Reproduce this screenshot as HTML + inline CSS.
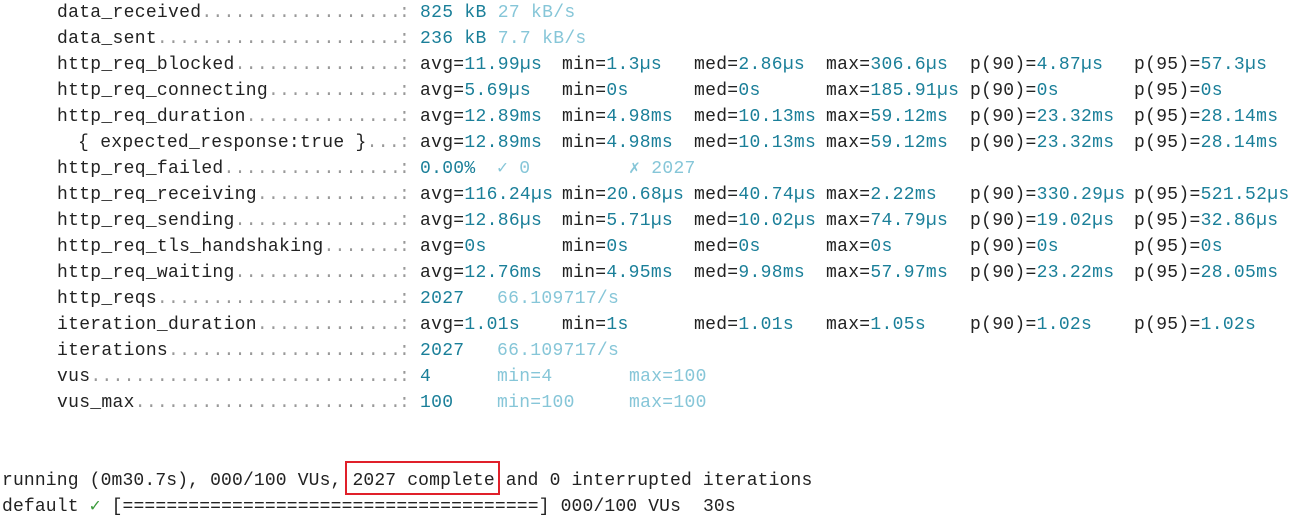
<!DOCTYPE html>
<html><head><meta charset="utf-8"><style>
body{margin:0;background:#fff;width:1293px;height:515px;overflow:hidden;position:relative;font-family:"Liberation Mono","DejaVu Sans Mono",monospace;font-size:18px;letter-spacing:0.3px;color:#222}
.r{position:absolute;left:0;height:26px;line-height:26px;white-space:pre;width:1293px}
.r span{position:absolute;top:0}
.n{left:57px;width:341px;overflow:hidden}
.d{color:#999}
.c{left:399px;color:#999}
.v{color:#1a7f99}
.l{color:#86c6d8}
b{font-weight:normal}
.bt{letter-spacing:0.15px}
</style></head><body>
<div class="r" style="top:0px"><span class="n">data_received<i class="d" style="font-style:normal">..............................</i></span><span class="c">:</span><span class="v" style="left:420px">825 kB <b class="l">27 kB/s</b></span></div>
<div class="r" style="top:26px"><span class="n">data_sent<i class="d" style="font-style:normal">..................................</i></span><span class="c">:</span><span class="v" style="left:420px">236 kB <b class="l">7.7 kB/s</b></span></div>
<div class="r" style="top:52px"><span class="n">http_req_blocked<i class="d" style="font-style:normal">..............................</i></span><span class="c">:</span><span style="left:420px">avg=<b class="v">11.99µs</b></span><span style="left:562px">min=<b class="v">1.3µs</b></span><span style="left:694px">med=<b class="v">2.86µs</b></span><span style="left:826px">max=<b class="v">306.6µs</b></span><span style="left:970px">p(90)=<b class="v">4.87µs</b></span><span style="left:1134px">p(95)=<b class="v">57.3µs</b></span></div>
<div class="r" style="top:78px"><span class="n">http_req_connecting<i class="d" style="font-style:normal">..............................</i></span><span class="c">:</span><span style="left:420px">avg=<b class="v">5.69µs</b></span><span style="left:562px">min=<b class="v">0s</b></span><span style="left:694px">med=<b class="v">0s</b></span><span style="left:826px">max=<b class="v">185.91µs</b></span><span style="left:970px">p(90)=<b class="v">0s</b></span><span style="left:1134px">p(95)=<b class="v">0s</b></span></div>
<div class="r" style="top:104px"><span class="n">http_req_duration<i class="d" style="font-style:normal">..............................</i></span><span class="c">:</span><span style="left:420px">avg=<b class="v">12.89ms</b></span><span style="left:562px">min=<b class="v">4.98ms</b></span><span style="left:694px">med=<b class="v">10.13ms</b></span><span style="left:826px">max=<b class="v">59.12ms</b></span><span style="left:970px">p(90)=<b class="v">23.32ms</b></span><span style="left:1134px">p(95)=<b class="v">28.14ms</b></span></div>
<div class="r" style="top:130px"><span class="n" style="left:78px;width:320px">{ expected_response:true }<i class="d" style="font-style:normal">..........</i></span><span class="c">:</span><span style="left:420px">avg=<b class="v">12.89ms</b></span><span style="left:562px">min=<b class="v">4.98ms</b></span><span style="left:694px">med=<b class="v">10.13ms</b></span><span style="left:826px">max=<b class="v">59.12ms</b></span><span style="left:970px">p(90)=<b class="v">23.32ms</b></span><span style="left:1134px">p(95)=<b class="v">28.14ms</b></span></div>
<div class="r" style="top:156px"><span class="n">http_req_failed<i class="d" style="font-style:normal">..............................</i></span><span class="c">:</span><span class="v" style="left:420px">0.00%</span><span class="l" style="left:497px">✓ 0</span><span class="l" style="left:629px">✗ 2027</span></div>
<div class="r" style="top:182px"><span class="n">http_req_receiving<i class="d" style="font-style:normal">..............................</i></span><span class="c">:</span><span style="left:420px">avg=<b class="v">116.24µs</b></span><span style="left:562px">min=<b class="v">20.68µs</b></span><span style="left:694px">med=<b class="v">40.74µs</b></span><span style="left:826px">max=<b class="v">2.22ms</b></span><span style="left:970px">p(90)=<b class="v">330.29µs</b></span><span style="left:1134px">p(95)=<b class="v">521.52µs</b></span></div>
<div class="r" style="top:208px"><span class="n">http_req_sending<i class="d" style="font-style:normal">..............................</i></span><span class="c">:</span><span style="left:420px">avg=<b class="v">12.86µs</b></span><span style="left:562px">min=<b class="v">5.71µs</b></span><span style="left:694px">med=<b class="v">10.02µs</b></span><span style="left:826px">max=<b class="v">74.79µs</b></span><span style="left:970px">p(90)=<b class="v">19.02µs</b></span><span style="left:1134px">p(95)=<b class="v">32.86µs</b></span></div>
<div class="r" style="top:234px"><span class="n">http_req_tls_handshaking<i class="d" style="font-style:normal">..............................</i></span><span class="c">:</span><span style="left:420px">avg=<b class="v">0s</b></span><span style="left:562px">min=<b class="v">0s</b></span><span style="left:694px">med=<b class="v">0s</b></span><span style="left:826px">max=<b class="v">0s</b></span><span style="left:970px">p(90)=<b class="v">0s</b></span><span style="left:1134px">p(95)=<b class="v">0s</b></span></div>
<div class="r" style="top:260px"><span class="n">http_req_waiting<i class="d" style="font-style:normal">..............................</i></span><span class="c">:</span><span style="left:420px">avg=<b class="v">12.76ms</b></span><span style="left:562px">min=<b class="v">4.95ms</b></span><span style="left:694px">med=<b class="v">9.98ms</b></span><span style="left:826px">max=<b class="v">57.97ms</b></span><span style="left:970px">p(90)=<b class="v">23.22ms</b></span><span style="left:1134px">p(95)=<b class="v">28.05ms</b></span></div>
<div class="r" style="top:286px"><span class="n">http_reqs<i class="d" style="font-style:normal">..................................</i></span><span class="c">:</span><span class="v" style="left:420px">2027</span><span class="l" style="left:497px">66.109717/s</span></div>
<div class="r" style="top:312px"><span class="n">iteration_duration<i class="d" style="font-style:normal">..............................</i></span><span class="c">:</span><span style="left:420px">avg=<b class="v">1.01s</b></span><span style="left:562px">min=<b class="v">1s</b></span><span style="left:694px">med=<b class="v">1.01s</b></span><span style="left:826px">max=<b class="v">1.05s</b></span><span style="left:970px">p(90)=<b class="v">1.02s</b></span><span style="left:1134px">p(95)=<b class="v">1.02s</b></span></div>
<div class="r" style="top:338px"><span class="n">iterations<i class="d" style="font-style:normal">..................................</i></span><span class="c">:</span><span class="v" style="left:420px">2027</span><span class="l" style="left:497px">66.109717/s</span></div>
<div class="r" style="top:364px"><span class="n">vus<i class="d" style="font-style:normal">..................................</i></span><span class="c">:</span><span class="v" style="left:420px">4</span><span class="l" style="left:497px">min=4</span><span class="l" style="left:629px">max=100</span></div>
<div class="r" style="top:390px"><span class="n">vus_max<i class="d" style="font-style:normal">..................................</i></span><span class="c">:</span><span class="v" style="left:420px">100</span><span class="l" style="left:497px">min=100</span><span class="l" style="left:629px">max=100</span></div>
<div class="r bt" style="top:468px"><span style="left:2px">running (0m30.7s), 000/100 VUs, 2027 complete and 0 interrupted iterations</span></div>
<div style="position:absolute;left:345px;top:461px;width:151px;height:30px;border:2px solid #e0202a"></div>
<div class="r bt" style="top:494px"><span style="left:2px">default <b style="color:#3a9a3a">✓</b> [======================================] 000/100 VUs  30s</span></div>
</body></html>
